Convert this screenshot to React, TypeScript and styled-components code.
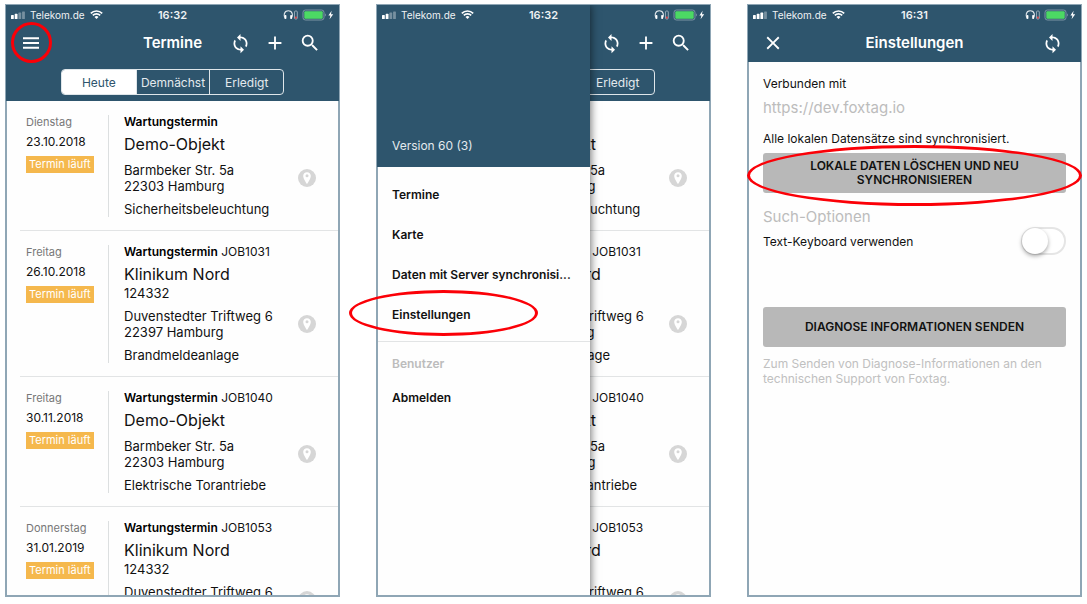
import React, { useId } from "react";
import styled, { createGlobalStyle } from "styled-components";
import { MdSync, MdSearch, MdAdd, MdClose } from "react-icons/md";

const navy = "#2e556d";
const frame = "#8fa6b5";
const rule = "#e2e4e5";

const GlobalStyle = createGlobalStyle`
  *, *::before, *::after { box-sizing: border-box; }
  body {
    margin: 0;
    background: #fff;
    color: #111;
    font-family: Inter, "Liberation Sans", sans-serif;
    font-size: 13px;
  }
  h1, h2, h3, p, ul { margin: 0; padding: 0; }
  ul { list-style: none; }
  button, input { font: inherit; }
`;

const Page = styled.main`
  display: grid;
  grid-template-columns: repeat(3, minmax(0, 1fr));
  gap: 36px;
  height: 100vh;
  padding: 4px 5px 7px;
`;

const Phone = styled.section`
  position: relative;
  min-width: 0;
  min-height: 0;
`;

const Screen = styled.div`
  position: relative;
  display: flex;
  flex-direction: column;
  height: 100%;
  overflow: hidden;
  border: 1px solid ${frame};
`;

const Body = styled.div`
  flex: 1;
  min-height: 0;
  overflow: hidden;
  border: solid ${frame};
  border-width: 0 1px 1px;
  background: #fefefe;
`;

const Header = styled.header`
  flex: none;
  background: ${navy};
  color: #fff;
`;

const Status = styled.div`
  position: relative;
  z-index: 3;
  display: grid;
  grid-template-columns: 1fr auto 1fr;
  align-items: center;
  height: 19px;
  padding: 0 5px;
  color: #eef2f4;
  font-size: 11px;
`;

const Carrier = styled.span`
  display: flex;
  align-items: center;
  gap: 5px;
  font-size: 10px;
`;

const Clock = styled.time`
  font-weight: 600;
`;

const Power = styled.span`
  display: flex;
  justify-content: flex-end;
`;

const Toolbar = styled.div`
  display: grid;
  grid-template-columns: 1fr auto 1fr;
  align-items: center;
  height: 38px;
  padding: 0 15px;
`;

const Title = styled.h1`
  font-size: 15px;
  font-weight: 600;
  line-height: 20px;
`;

const Actions = styled.div<{ $end?: boolean }>`
  display: flex;
  gap: 15px;
  justify-content: ${(p) => (p.$end ? "flex-end" : "flex-start")};
  padding-right: ${(p) => (p.$end ? 4 : 0)}px;
`;

const IconButton = styled.button`
  display: flex;
  align-items: center;
  justify-content: center;
  width: 20px;
  height: 20px;
  padding: 0;
  border: 0;
  background: none;
  color: #fff;
  svg { flex: none; }
`;

const Segments = styled.div`
  display: grid;
  grid-template-columns: repeat(3, 1fr);
  width: 67%;
  height: 26px;
  margin: 7px auto 6px;
  overflow: hidden;
  border: 1px solid #dfe6ea;
  border-radius: 4px;
`;

const Segment = styled.button<{ $active?: boolean }>`
  padding: 0;
  border: 0;
  border-left: 1px solid #dfe6ea;
  background: ${(p) => (p.$active ? "#fff" : "transparent")};
  color: ${(p) => (p.$active ? navy : "#e4eaee")};
  font-size: 12px;
  &:first-child { border-left: 0; }
`;

const Job = styled.li`
  display: grid;
  grid-template-columns: 82px 1fr;
  margin-left: 13px;
  padding: 14px 0 13px 6px;
  border-bottom: 1px solid ${rule};
`;

const When = styled.div`
  display: flex;
  flex-direction: column;
  align-items: flex-start;
`;

const Weekday = styled.span`
  color: #777;
  font-size: 11px;
  line-height: 14px;
`;

const DateText = styled.time`
  margin-top: 6px;
  font-size: 12px;
  line-height: 14px;
`;

const Badge = styled.span`
  margin-top: 7px;
  padding: 0 3px;
  background: #f5b84d;
  color: #fff;
  font-size: 11px;
  line-height: 17px;
  white-space: nowrap;
`;

const Detail = styled.div`
  min-width: 0;
  padding: 0 22px 0 15px;
  border-left: 1px solid #dcdfe0;
`;

const Kind = styled.p`
  font-size: 12px;
  line-height: 14px;
  b { font-weight: 600; color: #000; }
`;

const Site = styled.h2`
  margin-top: 4px;
  font-size: 16px;
  font-weight: 400;
  line-height: 22px;
`;

const Line = styled.p`
  line-height: 16px;
`;

const Place = styled.div`
  display: flex;
  align-items: center;
  justify-content: space-between;
  margin: 7px 0;
`;

const PinButton = styled.button`
  display: block;
  width: 18px;
  height: 18px;
  padding: 0;
  border: 0;
  background: none;
`;

const Drawer = styled.nav`
  position: absolute;
  inset: 0 auto 0 0;
  z-index: 2;
  display: flex;
  flex-direction: column;
  width: 64%;
  box-shadow: 1px 0 8px rgba(0, 0, 0, 0.55);
`;

const DrawerTop = styled.div`
  display: flex;
  flex: none;
  align-items: flex-end;
  height: 162px;
  padding: 0 15px 13px;
  background: ${navy};
  color: #e4eaee;
  font-size: 12px;
  line-height: 16px;
`;

const DrawerBody = styled.div`
  flex: 1;
  border: solid ${frame};
  border-width: 0 0 1px 1px;
  background: #fefefe;
`;

const Menu = styled.ul`
  padding: 8px 0 6px;
`;

const Account = styled.div`
  padding-top: 12px;
  border-top: 1px solid ${rule};
`;

const AccountLabel = styled.h2`
  padding-left: 14px;
  color: #bcbcbc;
  font-size: 12px;
  font-weight: 600;
  line-height: 20px;
`;

const MenuLink = styled.a<{ $tight?: boolean }>`
  display: block;
  padding: 0 14px;
  overflow: hidden;
  color: #111;
  font-size: 12px;
  font-weight: 600;
  line-height: ${(p) => (p.$tight ? 48 : 40)}px;
  text-decoration: none;
  white-space: nowrap;
`;

const Settings = styled.div`
  padding: 14px 14px 0;
`;

const Label = styled.p`
  font-size: 12px;
  line-height: 16px;
`;

const Muted = styled.p`
  color: #bcbcbc;
  font-size: 15px;
  font-weight: 400;
  line-height: 20px;
`;

const Server = styled.div`
  display: grid;
  gap: 6px;
  margin-bottom: 13px;
`;

const WideButton = styled.button`
  display: block;
  width: 100%;
  height: 40px;
  padding: 0 40px;
  border: 0;
  border-radius: 3px;
  background: #b8b8b8;
  color: #111;
  font-size: 12px;
  font-weight: 600;
  line-height: 14px;
`;

const Sync = styled.div`
  display: grid;
  gap: 6px;
`;

const Search = styled.div`
  margin: 14px 0 52px;
`;

const SwitchRow = styled.label`
  display: flex;
  align-items: center;
  justify-content: space-between;
  height: 28px;
  font-size: 12px;
`;

const Switch = styled.input`
  appearance: none;
  position: relative;
  width: 45px;
  height: 28px;
  margin: 0;
  border: 2px solid #e5e5e5;
  border-radius: 14px;
  background: #fff;
  &::before {
    content: "";
    position: absolute;
    top: -1px;
    left: -1px;
    width: 26px;
    height: 26px;
    border-radius: 50%;
    background: #fff;
    box-shadow: 0 2px 4px rgba(0, 0, 0, 0.35);
  }
  &:checked::before { left: 16px; }
`;

const Hint = styled.p`
  margin-top: 9px;
  color: #c0c0c0;
  font-size: 12px;
  line-height: 15px;
`;

const Mark = styled.span<{ $x: number; $y: number; $w: string; $h: number }>`
  position: absolute;
  z-index: 4;
  top: ${(p) => p.$y}px;
  left: ${(p) => p.$x}px;
  width: ${(p) => p.$w};
  height: ${(p) => p.$h}px;
  border: 3px solid #fb0007;
  border-radius: 50%;
  pointer-events: none;
`;

function Signal({ bars }: { bars: number }) {
  return (
    <svg width="14" height="8" viewBox="0 0 14 8" fill="#fff" aria-hidden="true">
      {[0, 1, 2, 3].map((i) => (
        <rect key={i} x={i * 3.7} y={4 - i * 1.2} width="2.8" height={4 + i * 1.2} rx=".6" opacity={i < bars ? 1 : 0.35} />
      ))}
    </svg>
  );
}

function Wifi() {
  return (
    <svg width="13" height="9" viewBox="0 0 13 9" fill="none" stroke="#fff" strokeWidth="1.7" aria-hidden="true">
      <path d="M.8 3.3a8.2 8.2 0 0 1 11.4 0M2.8 5.4a5.3 5.3 0 0 1 7.4 0" />
      <path d="M6.5 8.9 4.5 7a2.9 2.9 0 0 1 4 0z" fill="#fff" stroke="none" />
    </svg>
  );
}

function PowerIcons() {
  return (
    <svg width="51" height="12" viewBox="0 0 51 12" fill="none" aria-hidden="true">
      <path d="M2.2 9.2C.5 7.4.5 1.8 5.3 1.8s4.8 5.6 3.1 7.4" stroke="#dfe6ea" strokeWidth="1.1" />
      <rect x="1.5" y="6" width="1.9" height="4" rx=".8" fill="#fff" />
      <rect x="7.2" y="6" width="1.9" height="4" rx=".8" fill="#fff" />
      <rect x="11.5" y="2" width="2.8" height="8" rx="1" stroke="#a9bac5" strokeWidth=".8" />
      <rect x="12" y="7.6" width="1.8" height="2" fill="#e0484d" />
      <rect x="20" y="1" width="21" height="10" rx="2.4" stroke="#7c95a5" />
      <rect x="21.3" y="2.3" width="18.4" height="7.4" rx="1" fill="#4cd964" />
      <path d="M42.3 4.6c1 .4 1 2.4 0 2.8z" fill="#8ea4b2" />
      <path d="M48.6 1.8 45.4 6.6h2L46.6 10.2l3.6-5h-2.2z" fill="#fff" />
    </svg>
  );
}

function MenuLines() {
  return (
    <svg width="16" height="12" viewBox="0 0 16 12" stroke="#fff" strokeWidth="1.9" aria-hidden="true">
      <path d="M0 1.2h16M0 6h16M0 10.8h16" />
    </svg>
  );
}

function Pin() {
  return (
    <svg width="18" height="18" viewBox="0 0 18 18" aria-hidden="true">
      <circle cx="9" cy="9" r="9" fill="#d6d6d6" />
      <path d="M9 3.2c-2.2 0-3.8 1.6-3.8 3.7C5.2 9.6 9 15 9 15s3.8-5.4 3.8-8.1c0-2.1-1.6-3.7-3.8-3.7z" fill="#fff" />
      <circle cx="9" cy="6.8" r="1.5" fill="#d6d6d6" />
    </svg>
  );
}

function StatusBar({ time, bars }: { time: string; bars: number }) {
  return (
    <Status>
      <Carrier>
        <Signal bars={bars} />
        Telekom.de
        <Wifi />
      </Carrier>
      <Clock>{time}</Clock>
      <Power>
        <PowerIcons />
      </Power>
    </Status>
  );
}

type JobData = {
  day: string;
  date: string;
  job?: string;
  site: string;
  ref?: string;
  street: string;
  city: string;
  system: string;
};

const jobs: JobData[] = [
  { day: "Dienstag", date: "23.10.2018", site: "Demo-Objekt", street: "Barmbeker Str. 5a", city: "22303 Hamburg", system: "Sicherheitsbeleuchtung" },
  { day: "Freitag", date: "26.10.2018", job: "JOB1031", site: "Klinikum Nord", ref: "124332", street: "Duvenstedter Triftweg 6", city: "22397 Hamburg", system: "Brandmeldeanlage" },
  { day: "Freitag", date: "30.11.2018", job: "JOB1040", site: "Demo-Objekt", street: "Barmbeker Str. 5a", city: "22303 Hamburg", system: "Elektrische Torantriebe" },
  { day: "Donnerstag", date: "31.01.2019", job: "JOB1053", site: "Klinikum Nord", ref: "124332", street: "Duvenstedter Triftweg 6", city: "22397 Hamburg", system: "Brandmeldeanlage" },
];

function Appointments({ children }: { children?: React.ReactNode }) {
  return (
    <Screen>
      <Header>
        <StatusBar time="16:32" bars={2} />
        <Toolbar>
          <Actions>
            <IconButton aria-label="Menü">
              <MenuLines />
            </IconButton>
          </Actions>
          <Title>Termine</Title>
          <Actions $end>
            <IconButton aria-label="Synchronisieren">
              <MdSync size={21} />
            </IconButton>
            <IconButton aria-label="Neu">
              <MdAdd size={22} />
            </IconButton>
            <IconButton aria-label="Suchen">
              <MdSearch size={22} />
            </IconButton>
          </Actions>
        </Toolbar>
        <Segments>
          <Segment $active>Heute</Segment>
          <Segment>Demnächst</Segment>
          <Segment>Erledigt</Segment>
        </Segments>
      </Header>
      <Body>
        <ul>
          {jobs.map((j) => (
            <Job key={j.date}>
              <When>
                <Weekday>{j.day}</Weekday>
                <DateText>{j.date}</DateText>
                <Badge>Termin läuft</Badge>
              </When>
              <Detail>
                <Kind>
                  <b>Wartungstermin</b> {j.job}
                </Kind>
                <Site>{j.site}</Site>
                {j.ref && <Line>{j.ref}</Line>}
                <Place>
                  <div>
                    <Line>{j.street}</Line>
                    <Line>{j.city}</Line>
                  </div>
                  <PinButton aria-label="Auf Karte zeigen">
                    <Pin />
                  </PinButton>
                </Place>
                <Line>{j.system}</Line>
              </Detail>
            </Job>
          ))}
        </ul>
      </Body>
      {children}
    </Screen>
  );
}

function SideMenu() {
  return (
    <Drawer>
      <DrawerTop>Version 60 (3)</DrawerTop>
      <DrawerBody>
        <Menu>
          {["Termine", "Karte", "Daten mit Server synchronisi...", "Einstellungen"].map((t) => (
            <li key={t}>
              <MenuLink href="#">{t}</MenuLink>
            </li>
          ))}
        </Menu>
        <Account>
          <AccountLabel>Benutzer</AccountLabel>
          <MenuLink href="#" $tight>
            Abmelden
          </MenuLink>
        </Account>
      </DrawerBody>
    </Drawer>
  );
}

function SettingsScreen() {
  const id = useId();
  return (
    <Screen>
      <Header>
        <StatusBar time="16:31" bars={3} />
        <Toolbar>
          <Actions>
            <IconButton aria-label="Schließen">
              <MdClose size={22} />
            </IconButton>
          </Actions>
          <Title>Einstellungen</Title>
          <Actions $end>
            <IconButton aria-label="Synchronisieren">
              <MdSync size={21} />
            </IconButton>
          </Actions>
        </Toolbar>
      </Header>
      <Body>
        <Settings>
          <Server>
            <Label>Verbunden mit</Label>
            <Muted>https://dev.foxtag.io</Muted>
          </Server>
          <Sync>
            <Label>Alle lokalen Datensätze sind synchronisiert.</Label>
            <WideButton>LOKALE DATEN LÖSCHEN UND NEU SYNCHRONISIEREN</WideButton>
          </Sync>
          <Search>
            <Muted as="h2">Such-Optionen</Muted>
            <SwitchRow htmlFor={id}>
              Text-Keyboard verwenden
              <Switch id={id} type="checkbox" />
            </SwitchRow>
          </Search>
          <WideButton>DIAGNOSE INFORMATIONEN SENDEN</WideButton>
          <Hint>Zum Senden von Diagnose-Informationen an den technischen Support von Foxtag.</Hint>
        </Settings>
      </Body>
    </Screen>
  );
}

export default function App() {
  return (
    <>
      <GlobalStyle />
      <Page>
        <Phone>
          <Appointments />
          <Mark $x={6} $y={18} $w="41px" $h={41} />
        </Phone>
        <Phone>
          <Appointments>
            <SideMenu />
          </Appointments>
          <Mark $x={-27} $y={286} $w="189px" $h={46} />
        </Phone>
        <Phone>
          <SettingsScreen />
          <Mark $x={0} $y={141} $w="100%" $h={61} />
        </Phone>
      </Page>
    </>
  );
}
